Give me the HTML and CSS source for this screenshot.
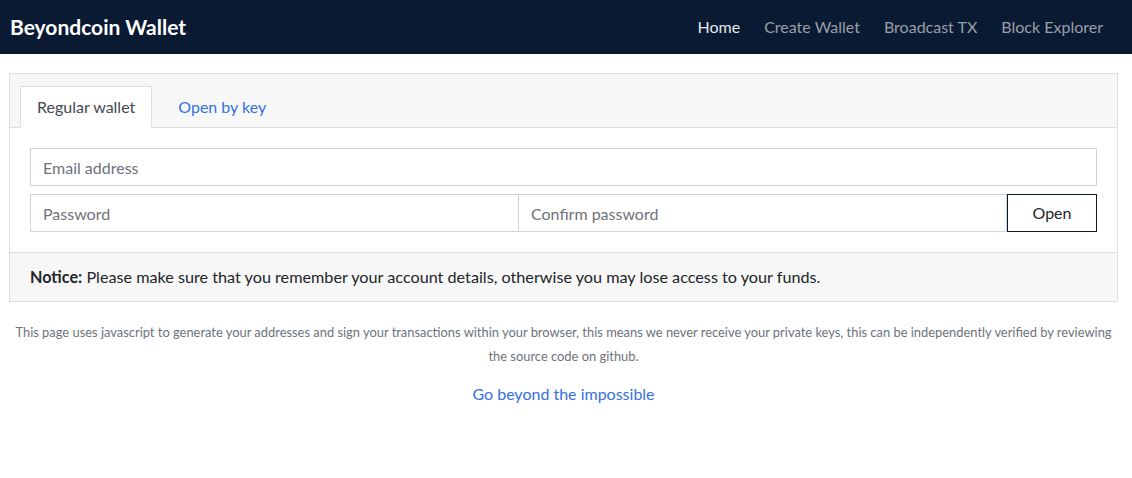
FILE: index.html
```html
<!DOCTYPE html>
<html lang="en">
<head>
<meta charset="utf-8">
<title>Beyondcoin Wallet</title>
<link rel="stylesheet" href="styles.css">
</head>
<body>
<nav class="navbar">
  <a class="brand" href="#">Beyondcoin Wallet</a>
  <ul class="nav-links">
    <li><a class="nav-link active" href="#">Home</a></li>
    <li><a class="nav-link" href="#">Create Wallet</a></li>
    <li><a class="nav-link" href="#">Broadcast TX</a></li>
    <li><a class="nav-link" href="#">Block Explorer</a></li>
  </ul>
</nav>
<main class="container">
  <section class="card">
    <div class="card-header">
      <ul class="tabs">
        <li><a class="tab active" href="#">Regular wallet</a></li>
        <li><a class="tab" href="#">Open by key</a></li>
      </ul>
    </div>
    <div class="card-body">
      <input class="field" type="text" placeholder="Email address">
      <div class="input-group">
        <input class="field half" type="password" placeholder="Password">
        <input class="field half joined" type="password" placeholder="Confirm password">
        <button class="btn-open" type="button">Open</button>
      </div>
    </div>
    <div class="card-footer">
      <strong>Notice:</strong> Please make sure that you remember your account details, otherwise you may lose access to your funds.
    </div>
  </section>
  <p class="info">This page uses javascript to generate your addresses and sign your transactions within your browser, this means we never receive your private keys, this can be independently verified by reviewing the source code on github.</p>
  <p class="tagline"><a href="#">Go beyond the impossible</a></p>
</main>
</body>
</html>
```
FILE: styles.css
```css
* { box-sizing: border-box; }
html, body { margin: 0; padding: 0; }
body {
  font-family: Lato, "Noto Sans", "Liberation Sans", sans-serif;
  font-size: 16px;
  line-height: 24px;
  color: #212529;
  background: #fff;
}
a { text-decoration: none; }

.navbar {
  height: 54px;
  background: #0b1a33;
  display: flex;
  align-items: center;
  justify-content: space-between;
  padding: 0 13px 0 10px;
}
.brand {
  color: #fff;
  font-weight: 700;
  font-size: 21px;
}
.nav-links {
  list-style: none;
  margin: 0;
  padding: 0;
  display: flex;
}
.nav-link {
  display: block;
  padding: 8px 16px 8px 8px;
  color: #9a9fa8;
  font-size: 16px;
}
.nav-link.active { color: #e6e8eb; }

.container {
  padding: 19px 14px 0 9px;
}
.card {
  border: 1px solid #dcdee1;
}
.card-header {
  background: #f7f7f7;
  border-bottom: 1px solid #dcdee1;
  padding: 12px 10px 0 10px;
}
.tabs {
  list-style: none;
  margin: 0 0 -1px 0;
  padding: 0;
  display: flex;
  gap: 9px;
}
.tab {
  display: block;
  padding: 8px 16px;
  border: 1px solid transparent;
  color: #3571de;
  line-height: 24px;
}
.tab.active {
  background: #fff;
  color: #444a52;
  border-color: #dcdee1 #dcdee1 #fff;
}
.card-body {
  padding: 20px;
  display: flex;
  flex-direction: column;
  gap: 8px;
}
.field {
  display: block;
  width: 100%;
  height: 38px;
  padding: 6px 12px;
  border: 1px solid #cfd3d8;
  font: inherit;
  color: #495057;
  background: #fff;
  outline: none;
}
.field::placeholder { color: #6c737b; }
.input-group {
  display: flex;
}
.field.half { flex: 1 1 0; width: auto; }
.field.joined { margin-left: -1px; }
.btn-open {
  flex: 0 0 90px;
  height: 38px;
  border: 1px solid #0b1a33;
  background: #fff;
  font: inherit;
  color: #212529;
}
.card-footer {
  background: #f7f7f7;
  border-top: 1px solid #dcdee1;
  padding: 12px 20px;
  font-size: 16.2px;
  color: #212529;
}
.card-footer strong { font-weight: 700; }
.info {
  margin: 18px 0 0;
  text-align: center;
  font-size: 12.9px;
  line-height: 24px;
  color: #6c737b;
  padding: 0;
}
.tagline {
  margin: 14px 0 0;
  text-align: center;
  font-size: 16px;
}
.tagline a { color: #3571de; }
```
